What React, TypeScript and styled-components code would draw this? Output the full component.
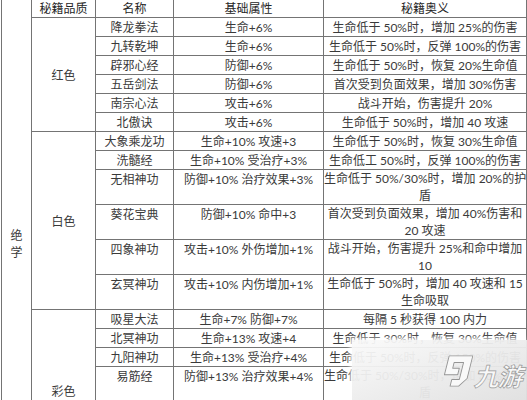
import styled, { createGlobalStyle } from "styled-components"

interface SkillRow {
  name: string
  attr: string
  effect: string[]
}

interface QualityGroup {
  quality: string
  rows: SkillRow[]
}

const groups: QualityGroup[] = [
  {
    quality: "红色",
    rows: [
      { name: "降龙拳法", attr: "生命+6%", effect: ["生命低于 50%时，增加 25%的伤害"] },
      { name: "九转乾坤", attr: "生命+6%", effect: ["生命低于 50%时，反弹 100%的伤害"] },
      { name: "辟邪心经", attr: "防御+6%", effect: ["生命低于 50%时，恢复 20%生命值"] },
      { name: "五岳剑法", attr: "防御+6%", effect: ["首次受到负面效果，增加 30%伤害"] },
      { name: "南宗心法", attr: "攻击+6%", effect: ["战斗开始，伤害提升 20%"] },
      { name: "北傲诀", attr: "攻击+6%", effect: ["生命低于 50%时，增加 40 攻速"] },
    ],
  },
  {
    quality: "白色",
    rows: [
      { name: "大象乘龙功", attr: "生命+10% 攻速+3", effect: ["生命低于 50%时，恢复 30%生命值"] },
      { name: "洗髓经", attr: "生命+10% 受治疗+3%", effect: ["生命低工 50%时，反弹 100%的伤害"] },
      { name: "无相神功", attr: "防御+10% 治疗效果+3%", effect: ["生命低于 50%/30%时，增加 20%的护", "盾"] },
      { name: "葵花宝典", attr: "防御+10% 命中+3", effect: ["首次受到负面效果，增加 40%伤害和", "20 攻速"] },
      { name: "四象神功", attr: "攻击+10% 外伤增加+1%", effect: ["战斗开始，伤害提升 25%和命中增加", "10"] },
      { name: "玄冥神功", attr: "攻击+10% 内伤增加+1%", effect: ["生命低于 50%时，增加 40 攻速和 15", "生命吸取"] },
    ],
  },
  {
    quality: "彩色",
    rows: [
      { name: "吸星大法", attr: "生命+7% 防御+7%", effect: ["每隔 5 秒获得 100 内力"] },
      { name: "北冥神功", attr: "生命+13% 攻速+4", effect: ["生命低于 30%时，恢复 30%生命值"] },
      { name: "九阳神功", attr: "生命+13% 受治疗+4%", effect: ["生命低于 50%时，反弹 150%的伤害"] },
      { name: "易筋经", attr: "防御+13% 治疗效果+4%", effect: ["生命低于 50%/30%时，增加 30%的护", "盾"] },
      { name: "金刚不坏", attr: "防御+13% 命中+4", effect: ["首次受到负面效果，增加 50%伤害和", "30 攻速"] },
      { name: "太极神功", attr: "攻击+13% 外伤增加+2%", effect: ["战斗开始，伤害提升 30%和命中增加", "15"] },
    ],
  },
]

const totalRows = groups.reduce((sum, g) => sum + g.rows.length, 0)

const GlobalStyle = createGlobalStyle`
  html, body {
    margin: 0;
    padding: 0;
    background: #ffffff;
    overflow: hidden;
  }
`

const Page = styled.div`
  position: relative;
  width: 527px;
  height: 400px;
  overflow: hidden;
  background: #ffffff;
  font-family: "Lato", "Noto Sans CJK SC", sans-serif;
  font-size: 12px;
  color: #3a3a3a;
`

const Table = styled.table`
  margin: -2px 0 0 1px;
  width: 525px;
  table-layout: fixed;
  border-collapse: collapse;
`

const Cell = styled.td<{ $multi?: boolean }>`
  padding: ${(p) => (p.$multi ? "0" : "1px")} 0 0;
  border: 1px solid #747474;
  line-height: 17px;
  text-align: center;
  vertical-align: top;
  white-space: nowrap;
`

const Head = styled(Cell).attrs({ as: "th" })`
  font-weight: 400;
  color: #262626;
`

const Category = styled(Cell)`
  padding-top: 18px;
  vertical-align: middle;
`

const Quality = styled(Cell)`
  vertical-align: middle;
`

const Watermark = styled.div`
  position: absolute;
  left: 352px;
  top: 340px;
  right: 0;
  bottom: 0;
  display: flex;
  align-items: center;
  justify-content: flex-end;
  gap: 3px;
  padding: 2px 3px 0 0;
  background: linear-gradient(
    160deg,
    rgba(250, 250, 250, 0.94) 0%,
    rgba(238, 238, 238, 0.95) 45%,
    rgba(224, 224, 224, 0.96) 100%
  );
  box-shadow: -2px -2px 4px rgba(255, 255, 255, 0.8);
`

const LogoMark = styled.svg`
  width: 34px;
  height: 36px;
`

const LogoText = styled.span`
  font-family: "Noto Sans CJK SC", sans-serif;
  font-size: 25px;
  font-weight: 700;
  line-height: 1;
  color: #f8f8f8;
  -webkit-text-stroke: 0.7px #999999;
  letter-spacing: -1px;
  transform: skewX(-14deg);
  margin-top: 8px;
`

export default function App() {
  return (
    <Page>
      <GlobalStyle />
      <Table>
        <colgroup>
          <col style={{ width: 30 }} />
          <col style={{ width: 64 }} />
          <col style={{ width: 78 }} />
          <col style={{ width: 150 }} />
          <col style={{ width: 203 }} />
        </colgroup>
        <tbody>
          <tr>
            <Category rowSpan={totalRows + 1}>
              绝<br />学
            </Category>
            <Head>秘籍品质</Head>
            <Head>名称</Head>
            <Head>基础属性</Head>
            <Head>秘籍奥义</Head>
          </tr>
          {groups.map((group) =>
            group.rows.map((row, i) => (
              <tr key={row.name}>
                {i === 0 && (
                  <Quality rowSpan={group.rows.length}>{group.quality}</Quality>
                )}
                <Cell>{row.name}</Cell>
                <Cell>{row.attr}</Cell>
                <Cell $multi={row.effect.length > 1}>
                  {row.effect.map((line, j) => (
                    <span key={j}>
                      {j > 0 && <br />}
                      {line}
                    </span>
                  ))}
                </Cell>
              </tr>
            ))
          )}
        </tbody>
      </Table>
      <Watermark>
        <LogoMark viewBox="0 0 36 34">
          <g transform="skewX(-14) translate(8 1)">
            <path
              d="M3 0 H28 V24 L21 32 H12 V25 H20 V7 H10 V13 H17 V20 H3 Z"
              fill="#f9f9f9"
              stroke="#959595"
              strokeWidth="1"
              strokeLinejoin="round"
            />
          </g>
        </LogoMark>
        <LogoText>九游</LogoText>
      </Watermark>
    </Page>
  )
}
